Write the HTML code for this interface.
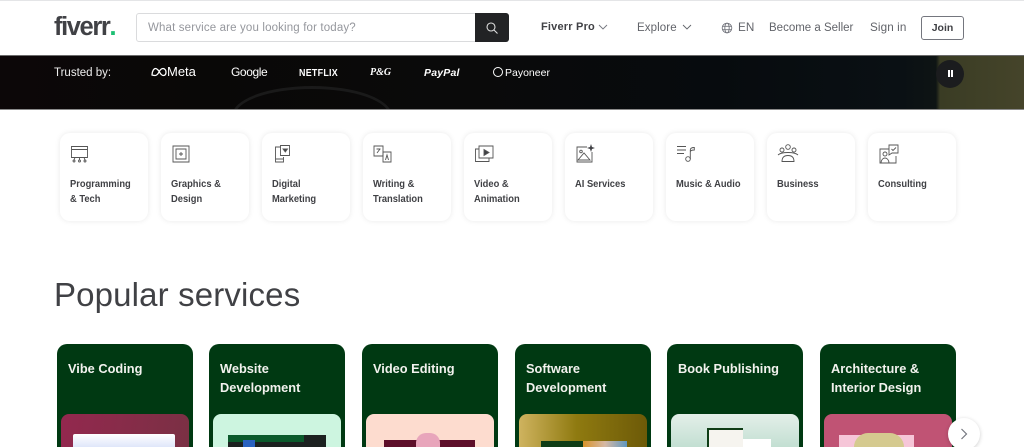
<!DOCTYPE html>
<html><head><meta charset="utf-8"><style>
*{box-sizing:border-box}
html,body{margin:0;padding:0;width:1024px;height:447px;overflow:hidden;background:#fff;font-family:"Liberation Sans",sans-serif}
#w{position:relative;width:1024px;height:447px;overflow:hidden;background:#fff}
.a{position:absolute;white-space:nowrap}
.n{font-size:11.7px;color:#62646a;top:20px;line-height:15px;letter-spacing:.1px}
.c{position:absolute;top:133px;width:88px;height:88px;border-radius:10px;background:#fff;box-shadow:0 0 6px rgba(0,0,0,.09)}
.c svg{position:absolute;left:10px;top:11px}
.c div{position:absolute;left:9.500px;top:44px;font-size:10.5px;line-height:14.5px;font-weight:bold;color:#404145;white-space:nowrap;transform:scaleX(.89);transform-origin:left}
.g{position:absolute;top:344px;width:136px;height:103px;border-radius:10px 10px 0 0;background:#003912;overflow:hidden}
.g>div{position:absolute;left:11px;top:15px;font-size:12.8px;line-height:19px;font-weight:bold;color:#f2f2ee;white-space:nowrap}
.g i{position:absolute;left:4px;top:70px;width:128px;height:33px;border-radius:8px 8px 0 0;display:block;overflow:hidden}
.g i b{position:absolute;display:block}
.l{font-size:11px;color:#fff;top:66px;line-height:14px}
</style></head><body><div id="w">
<div class="a" style="left:0;top:0;width:1024px;height:1px;background:#e4e5e7"></div>
<div class="a" style="left:54px;top:10px;font-size:25.5px;line-height:32px;font-weight:bold;color:#404145;letter-spacing:-1.4px">fiverr<span style="color:#1dbf73;font-size:26px">.</span></div>
<div class="a" style="left:136px;top:13px;width:373px;height:29px;border:1px solid #dadbdd;border-radius:3px"></div>
<div class="a" style="left:148px;top:21px;font-size:11.5px;line-height:15px;color:#95979d;letter-spacing:.15px">What service are you looking for today?</div>
<div class="a" style="left:475px;top:13px;width:34px;height:29px;background:#222325;border-radius:0 3px 3px 0"></div>
<svg class="a" style="left:485px;top:21px" width="14" height="14" viewBox="0 0 14 14" fill="none" stroke="#ddd" stroke-width="1.100"><circle cx="6" cy="6" r="4"/><path d="M9 9l3.500 3.500"/></svg>
<div class="a n" style="left:541px;color:#404145;font-weight:bold;font-size:11px;letter-spacing:.2px">Fiverr Pro</div>
<svg class="a" style="left:598px;top:24px" width="10" height="7" fill="none" stroke="#74767e" stroke-width=".9"><path d="M1 1l4 4 4-4"/></svg>
<div class="a n" style="left:637px;top:21px;font-size:11.5px">Explore</div>
<svg class="a" style="left:682px;top:24px" width="10" height="7" fill="none" stroke="#62646a" stroke-width=".9"><path d="M1 1l4 4 4-4"/></svg>
<svg class="a" style="left:721px;top:22px" width="12" height="12" fill="none" stroke="#74767e" stroke-width=".9"><circle cx="6" cy="6" r="4.800"/><ellipse cx="6" cy="6" rx="2.200" ry="4.800"/><path d="M1.200 4.300h9.600M1.200 7.700h9.600"/></svg>
<div class="a n" style="left:738px">EN</div>
<div class="a n" style="left:769px;top:21px;font-size:11.500px;letter-spacing:0">Become a Seller</div>
<div class="a n" style="left:870px">Sign in</div>
<div class="a" style="left:921px;top:16px;width:43px;height:24px;border:1px solid #74767e;border-radius:3px;text-align:center;font-size:10.5px;line-height:22px;font-weight:bold;color:#404145">Join</div>

<div class="a" style="left:0;top:55px;width:1024px;height:55px;background:linear-gradient(90deg,#0c0708 0,#090807 20%,#0a0a0a 45%,#070b0e 70%,#0a1014 88%,#0e1414 91.400%,#3a3c24 91.800%,#45442a 100%);border-top:1px solid #6b6b6b;border-bottom:1px solid #8a8a8a"></div>
<div class="a" style="left:232px;top:86px;width:160px;height:23px;overflow:hidden"><div style="width:160px;height:60px;border:3px solid #1a1a1a;border-radius:50%"></div></div>
<div class="a l" style="left:54px;top:66px;font-size:11.500px;color:#eee">Trusted by:</div>
<svg class="a" style="left:151px;top:67px" width="16" height="10" fill="none" stroke="#fff" stroke-width="1.300"><path d="M1 8C1 4 3 1.500 4.500 1.500S8 4 8.500 5 10.500 8.500 12.500 8.500 15 7 15 5 13.500 1.500 12 1.500 9 3 8 5 5.500 8.500 4 8.500 1 8 1 8Z"/></svg>
<div class="a l" style="left:167px;top:65px;font-size:13px">Meta</div>
<div class="a l" style="left:231px;top:65px;font-size:12px;letter-spacing:-.4px">Google</div>
<div class="a l" style="left:299px;top:66px;font-weight:bold;font-size:10.5px;letter-spacing:.3px;transform:scaleX(.85);transform-origin:left">NETFLIX</div>
<div class="a l" style="left:370px;top:66px;font-family:'Liberation Serif',serif;font-style:italic;font-weight:bold;font-size:10px">P&amp;G</div>
<div class="a l" style="left:424px;top:66px;font-style:italic;font-weight:bold;font-size:10.500px;letter-spacing:.2px">PayPal</div>
<div class="a" style="left:493px;top:67px;width:10px;height:10px;border:1px solid #fff;border-radius:50%"></div>
<div class="a l" style="left:505px;top:66px;font-size:10.5px">Payoneer</div>
<div class="a" style="left:936px;top:60px;width:28px;height:28px;border-radius:50%;background:#1b1c1e"></div>
<div class="a" style="left:948px;top:70px;width:2px;height:7px;background:#fff"></div>
<div class="a" style="left:951px;top:70px;width:2px;height:7px;background:#fff"></div>

<div class="c" style="left:60px"><svg width="20" height="20" fill="none" stroke="#555" stroke-width=".9"><path d="M1.500 2.500h16v11h-16zM1.500 5.500h16M5 13.500L4 16M9.500 13.500V16M14 13.500L15 16"/><circle cx="4" cy="17" r="1"/><circle cx="9.500" cy="17" r="1"/><circle cx="15" cy="17" r="1"/></svg><div>Programming<br>&amp; Tech</div></div>
<div class="c" style="left:161px"><svg width="20" height="20" fill="none" stroke="#555" stroke-width=".9"><path d="M2 2h16v16H2zM5 5h10v10H5zM10 8v4M8 10h4"/></svg><div>Graphics &amp;<br>Design</div></div>
<div class="c" style="left:262px"><svg width="20" height="20" fill="none" stroke="#555" stroke-width=".9"><path d="M9 3H3.500v15h8v-5M3.500 15h8"/><path d="M8.500 1.500h9v10h-9z"/><path d="M11 5h4.500l-2.200 3z" fill="#404145"/></svg><div>Digital<br>Marketing</div></div>
<div class="c" style="left:363px"><svg width="20" height="20" fill="none" stroke="#555" stroke-width=".9"><path d="M1 2h9v10H1z"/><path d="M10 8h8v10h-8z"/><path d="M3.500 5h4M4 9l3-4"/><path d="M12.500 16l1.500-5 1.500 5"/></svg><div>Writing &amp;<br>Translation</div></div>
<div class="c" style="left:464px"><svg width="20" height="20" fill="none" stroke="#555" stroke-width=".9"><path d="M5 2h14v12H5z"/><path d="M5 5H1.500v12.500H15V14"/><path d="M10 5.500l5 3-5 3z" fill="#404145"/></svg><div>Video &amp;<br>Animation</div></div>
<div class="c" style="left:565px"><svg width="20" height="20" fill="none" stroke="#555" stroke-width=".9"><path d="M12 3H2v15h15V8"/><circle cx="6" cy="7.500" r="1.300"/><path d="M3 16l6-7 6 7z"/><path d="M16 0l1 3 3 1-3 1-1 3-1-3-3-1 3-1z" fill="#404145" stroke="none"/></svg><div>AI Services</div></div>
<div class="c" style="left:666px"><svg width="20" height="20" fill="none" stroke="#555" stroke-width=".9"><path d="M1 2.500h9M1 6h9M1 9.500h7"/><circle cx="12" cy="15" r="2.300"/><path d="M14.300 15V6c0-2 2-2.500 4-2.500V6c-2 0-4 .5-4 2"/></svg><div>Music &amp; Audio</div></div>
<div class="c" style="left:767px"><svg width="22" height="20" fill="none" stroke="#555" stroke-width=".9"><circle cx="11" cy="3" r="2.300"/><circle cx="5" cy="6" r="2"/><circle cx="17" cy="6" r="2"/><path d="M1 11c2-2 5-2.500 10-2.500S19 9 21 11M5 17.500c0-4 2-6 6-6s6 2 6 6z"/></svg><div>Business</div></div>
<div class="c" style="left:868px"><svg width="22" height="20" fill="none" stroke="#555" stroke-width=".9"><path d="M11 5H2v14h16v-7"/><circle cx="7" cy="10" r="2"/><path d="M3 19c0-3 2-5 4-5s4 2 4 5"/><path d="M11 1h9v8h-6l-3 2z"/><path d="M13.500 5l1.500 1.500L18 3.500"/></svg><div>Consulting</div></div>

<div class="a" style="left:54px;top:273px;font-size:33px;line-height:44px;color:#404145;letter-spacing:.15px">Popular services</div>

<div class="g" style="left:57px"><div>Vibe Coding</div><i style="background:linear-gradient(100deg,#93284e,#7a3044)"><b style="left:12px;top:20px;width:102px;height:13px;background:linear-gradient(#fff,#dfe6fa);border-radius:2px 2px 0 0"></b></i></div>
<div class="g" style="left:209px"><div>Website<br>Development</div><i style="background:#cdf5e0"><b style="left:15px;top:21px;width:98px;height:12px;background:#1c2120"></b><b style="left:15px;top:21px;width:76px;height:7px;background:#0b5a2c"></b><b style="left:30px;top:26px;width:12px;height:7px;background:#2a62c0"></b></i></div>
<div class="g" style="left:362px"><div>Video Editing</div><i style="background:#fddccf"><b style="left:18px;top:26px;width:91px;height:7px;background:#5e0f2a"></b><b style="left:50px;top:19px;width:24px;height:14px;background:#e8a5bb;border-radius:10px 10px 0 0"></b></i></div>
<div class="g" style="left:515px"><div>Software<br>Development</div><i style="background:linear-gradient(90deg,#cfb35f,#8f7a10 45%,#6d5a08)"><b style="left:22px;top:27px;width:42px;height:6px;background:#0f3d16"></b><b style="left:64px;top:27px;width:44px;height:6px;background:linear-gradient(90deg,#d9932a,#d5b9a5,#5f97c0)"></b></i></div>
<div class="g" style="left:667px"><div>Book Publishing</div><i style="background:linear-gradient(#e4efe9,#c3dfd2)"><b style="left:36px;top:14px;width:36px;height:19px;background:#f6f4ef;border-left:2px solid #0f3d16;border-top:2px solid #0f3d16"></b><b style="left:72px;top:25px;width:28px;height:8px;background:#fff"></b></i></div>
<div class="g" style="left:820px"><div>Architecture &amp;<br>Interior Design</div><i style="background:#c05374"><b style="left:15px;top:21px;width:75px;height:12px;background:#f6c6d8"></b><b style="left:30px;top:19px;width:50px;height:14px;background:#d5ca8f;border-radius:25px 25px 0 0"></b></i></div>
<div class="a" style="left:944px;top:414px;width:40px;height:33px;overflow:hidden"><div style="position:absolute;left:4px;top:4px;width:32px;height:32px;border-radius:50%;background:#fff;box-shadow:0 1px 4px rgba(0,0,0,.2)"></div></div>
<svg class="a" style="left:960px;top:428px" width="8" height="12" fill="none" stroke="#74767e" stroke-width="1.200"><path d="M1.500 1l5 5-5 5"/></svg>
</div></body></html>
